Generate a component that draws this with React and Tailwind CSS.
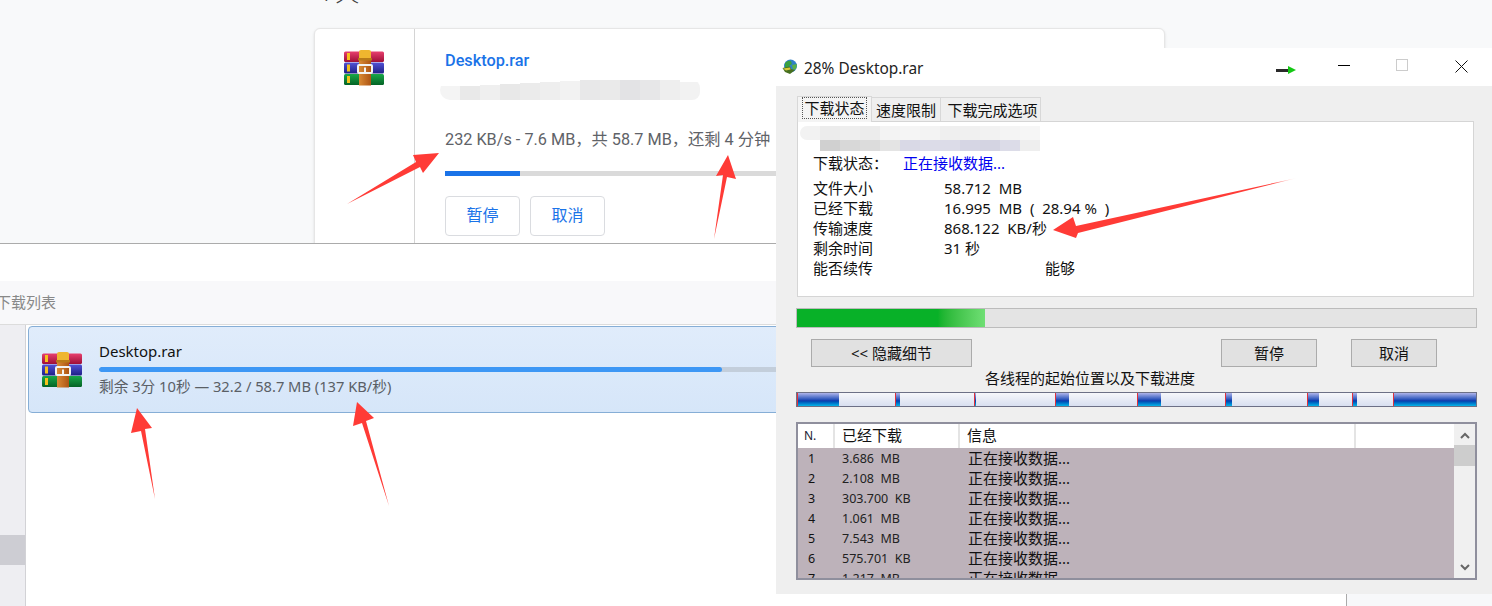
import React from "react";

const cjk = "font-['Noto_Sans','Noto_Sans_CJK_SC',sans-serif]";

const threads = [
  ["1", "3.686  MB"],
  ["2", "2.108  MB"],
  ["3", "303.700  KB"],
  ["4", "1.061  MB"],
  ["5", "7.543  MB"],
  ["6", "575.701  KB"],
  ["7", "1.217  MB"],
];

const details = [
  ["文件大小", "58.712  MB"],
  ["已经下载", "16.995  MB  (  28.94 %  )"],
  ["传输速度", "868.122  KB/秒"],
  ["剩余时间", "31 秒"],
];

// widths are px on the thread bar, from left to right
const segments = [
  ["blue", 42], ["light", 56], ["blue", 5], ["light", 74], ["blue", 2], ["light", 79],
  ["blue", 14], ["light", 68], ["blue", 24], ["light", 64], ["blue", 7], ["light", 75],
  ["blue", 12], ["light", 33], ["blue", 5], ["light", 36], ["blue", 83],
];

const cardSmudge = [
  ["h-[14px]", "bg-[#f4f4f4]"], ["h-[14px]", "bg-[#e9e9e9]"], ["h-[15px]", "bg-[#efefef]"], ["h-[16px]", "bg-[#e8e8e8]"],
  ["h-[17px]", "bg-[#ebebeb]"], ["h-[18px]", "bg-[#eeeeee]"], ["h-[19px]", "bg-[#f2f2f2]"], ["h-[20px]", "bg-[#e8e8e9]"],
  ["h-[20px]", "bg-[#eaeaea]"], ["h-[20px]", "bg-[#e3e3e5]"], ["h-[20px]", "bg-[#e7e7e8]"], ["h-[20px]", "bg-[#eeeeee]"],
  ["h-[18px]", "bg-[#f2f2f2]"],
];

const idmSmudgeTop = ["bg-[#f2f2f2]", "bg-[#ececec]", "bg-[#eeeeee]", "bg-[#ececec]", "bg-[#f3f3f3]", "bg-[#f5f5f5]", "bg-[#f3f3f3]", "bg-[#efefef]", "bg-[#f0f0f0]", "bg-[#f2f2f2]", "bg-[#f4f4f4]", "bg-[#f6f6f6]"];
const idmSmudgeBottom = ["bg-[#d0d0d0]", "bg-[#d8d8d8]", "bg-[#dcdcdc]", "bg-[#e4e4e4]", "bg-[#d9d9e6]", "bg-[#dcdce8]", "bg-[#dcdce8]", "bg-[#d6d6e4]", "bg-[#d4d4e2]", "bg-[#dcdce8]", "bg-[#eeeeee]"];

function RarIcon() {
  return (
    <svg width="40" height="36" viewBox="0 0 40 36">
      <defs>
        <linearGradient id="rarRed" x1="0" y1="0" x2="0" y2="1">
          <stop offset="0" stopColor="#e8406e" />
          <stop offset="1" stopColor="#9e0f38" />
        </linearGradient>
        <linearGradient id="rarBlue" x1="0" y1="0" x2="0" y2="1">
          <stop offset="0" stopColor="#5252d6" />
          <stop offset="1" stopColor="#1e1e86" />
        </linearGradient>
        <linearGradient id="rarGreen" x1="0" y1="0" x2="0" y2="1">
          <stop offset="0" stopColor="#18a848" />
          <stop offset="1" stopColor="#056326" />
        </linearGradient>
        <linearGradient id="rarBelt" x1="0" y1="0" x2="1" y2="0">
          <stop offset="0" stopColor="#d98a34" />
          <stop offset="1" stopColor="#ad5414" />
        </linearGradient>
      </defs>
      <rect x="0" y="1.5" width="40" height="10.5" rx="1.5" fill="url(#rarRed)" />
      <rect x="0" y="12.5" width="40" height="11" rx="1.5" fill="url(#rarBlue)" />
      <rect x="0" y="24" width="40" height="11" rx="1.5" fill="url(#rarGreen)" />
      <rect x="3" y="3" width="3" height="7" fill="#f6c21c" />
      <rect x="3" y="14.5" width="3" height="7" fill="#f6c21c" />
      <rect x="3" y="26" width="3" height="7" fill="#f6c21c" />
      <rect x="15" y="8" width="12" height="27.5" fill="url(#rarBelt)" />
      <path d="M15 9 V2 Q15 0 17 0 H25 Q27 0 27 2 V9 Z" fill="#efb62f" />
      <rect x="14" y="8" width="14" height="2.5" rx="0.5" fill="#b97a18" />
      <rect x="14" y="15" width="14" height="8" rx="1" fill="none" stroke="#f2f2f2" strokeWidth="2" />
      <rect x="20" y="17.5" width="2" height="5" fill="#f2f2f2" />
    </svg>
  );
}

function GlobeIcon() {
  return (
    <svg width="16" height="16" viewBox="0 0 16 16">
      <circle cx="8.5" cy="7" r="6.5" fill="#2f7fc8" />
      <path d="M3 4 Q6 1 9 2 L10 5 L7 7 L8 10 L5 11 L3 8 Z" fill="#3aa040" />
      <path d="M10 6 L15 5 L14 10 L11 11 Z" fill="#58b048" />
      <path d="M0.5 9 L8 7.5 L9 10 L13 11 L8 15 L3 13 Z" fill="#47701f" />
      <path d="M1 9.5 L8 8.5 L8.5 10.5 L4 11.5 Z" fill="#d8c838" />
    </svg>
  );
}

function Chevron({ down }) {
  return (
    <svg width="10" height="7" viewBox="0 0 10 7" fill="none" stroke="#666" strokeWidth="2">
      <path d={down ? "M1 1 L5 5 L9 1" : "M1 6 L5 2 L9 6"} />
    </svg>
  );
}

function BrowserPage() {
  return (
    <div className="absolute inset-x-0 top-0 h-[243px] overflow-hidden bg-[#f8f9fa] font-['Roboto','Noto_Sans_CJK_SC',sans-serif]">
      <div className="h-[28px] pl-[322px] -mt-[21px] pt-0 text-[24px] leading-[28px] text-[#444] font-light mb-[21px]">7天</div>
      <div className="ml-[314px] flex h-[240px] w-[851px] rounded-md border border-[#e6e6e6] bg-white shadow-sm">
        <div className="w-[100px] border-r border-[#d4d4d4] pl-[29px] pt-[21px]">
          <RarIcon />
        </div>
        <div className="flex-1 pl-[30px]">
          <div className="mt-[22px] text-[16.3px] leading-5 font-medium text-[#1a73e8]">Desktop.rar</div>
          <div className="mt-[9px] -ml-[5px] flex h-[20px] w-[260px] items-end overflow-hidden rounded-l-[10px] rounded-r-[8px]">
            {cardSmudge.map(([h, color], i) => (
              <div key={i} className={`w-[20px] ${h} ${color}`} />
            ))}
          </div>
          <div className="mt-[30px] text-[16.25px] leading-5 whitespace-pre text-[#5f6368]">232 KB/s - 7.6 MB，共 58.7 MB，还剩 4 分钟</div>
          <div className="mt-[21px] flex h-[5px] w-[340px] bg-[#dadada]">
            <div className="w-[75px] bg-[#1a73e8]" />
          </div>
          <div className="mt-[20px] flex gap-[10px]">
            <button className="flex h-[40px] w-[75px] items-center justify-center rounded border border-[#dadce0] text-[16px] text-[#1a73e8]">暂停</button>
            <button className="flex h-[40px] w-[75px] items-center justify-center rounded border border-[#dadce0] text-[16px] text-[#1a73e8]">取消</button>
          </div>
        </div>
      </div>
    </div>
  );
}

function DownloadList() {
  return (
    <div className={`absolute inset-x-0 top-[243px] bottom-0 flex flex-col border-t border-[#ababab] bg-white ${cjk}`}>
      <div className="h-[37px] shrink-0" />
      <div className="flex h-[44px] shrink-0 items-center overflow-hidden border-b border-[#dcdcdc] bg-[#f8f8fa] text-[15px] text-[#888]">
        <span className="-ml-[4px]">下载列表</span>
      </div>
      <div className="flex flex-1">
        <div className="w-[26px] shrink-0 border-r border-[#d2d2d6] bg-[#eeeef2] pt-[210px]">
          <div className="h-[30px] bg-[#cdcdd3]" />
        </div>
        <div className="flex-1 pt-[1px] pl-[2px] pr-[2px]">
          <div className="flex h-[87px] items-start rounded border border-[#86aed6] bg-gradient-to-b from-[#e0ecfb] to-[#d6e6f9] pl-[13px]">
            <div className="pt-[25px]">
              <RarIcon />
            </div>
            <div className="flex-1 pl-[17px]">
              <div className="mt-[14px] text-[15px] leading-[20px] text-[#111]">Desktop.rar</div>
              <div className="mt-[6px] flex h-[5px] overflow-hidden rounded-full bg-[#c3cedb]">
                <div className="w-[623px] rounded-full bg-[#3d97f5]" />
              </div>
              <div className="mt-[4px] text-[14.7px] leading-[20px] whitespace-pre text-[#5a5f66]">剩余 3分 10秒 — 32.2 / 58.7 MB (137 KB/秒)</div>
            </div>
          </div>
        </div>
        <div className="w-[146px] shrink-0 border-l border-[#aaaaaa] bg-[#f7f8fa]" />
      </div>
    </div>
  );
}

function DownloadWindow() {
  return (
    <div className={`absolute top-[48px] left-[776px] flex h-[546px] w-[716px] flex-col bg-[#efefef] text-[#111] ${cjk}`}>
      <div className="flex h-[38px] shrink-0 items-center bg-white">
        <div className="ml-[6px] mr-[6px]">
          <GlobeIcon />
        </div>
        <span className="mt-[3px] w-[120px] text-[15.4px] leading-5 whitespace-nowrap text-[#222]">28% Desktop.rar</span>
        <div className="ml-[352px] mt-[6px] flex items-center">
          <div className="h-[3px] w-[12px] bg-[#2a2a2a]" />
          <svg width="8" height="8" viewBox="0 0 8 8">
            <path d="M0 0 L8 4 L0 8 Z" fill="#14c814" />
          </svg>
        </div>
        <div className="ml-[42px] h-px w-[12px] -translate-y-[2px] bg-black" />
        <div className="ml-[46px] h-[12px] w-[12px] border border-[#cccccc] -translate-y-[2px]" />
        <svg className="ml-[47px] -translate-y-[1px]" width="13" height="13" viewBox="0 0 13 13" stroke="#111" strokeWidth="1">
          <path d="M0.5 0.5 L12.5 12.5 M12.5 0.5 L0.5 12.5" />
        </svg>
      </div>

      <div className="pl-[20px] pt-[10px]">
        <div className="ml-px flex h-[25px] items-end text-[15px] leading-[20px]">
          <div className="z-10 -mb-px flex h-[26px] w-[75px] items-start justify-center border border-[#d8d8d8] border-b-0 bg-[#f4f4f4]">
            <span className="border border-dotted border-[#555] px-[1px]">下载状态</span>
          </div>
          <div className="flex h-[24px] w-[69px] items-center justify-center border-t border-r border-[#d8d8d8]">速度限制</div>
          <div className="flex h-[24px] w-[100px] items-center justify-center border-t border-r border-[#d8d8d8] pl-[4px]">下载完成选项</div>
        </div>

        <div className="ml-px h-[176px] w-[677px] border border-[#d5d5d5] bg-white pt-[4px]">
          <div className="ml-[2px] flex h-[14px] overflow-hidden rounded-l-[7px]">
            {idmSmudgeTop.map((color, i) => (
              <div key={i} className={`h-full w-[20px] ${color}`} />
            ))}
          </div>
          <div className="ml-[22px] flex h-[11px]">
            {idmSmudgeBottom.map((color, i) => (
              <div key={i} className={`h-full w-[20px] ${color}`} />
            ))}
          </div>
          <div className="mt-[1px] flex h-[22px] items-center pl-[15px] text-[15px]">
            <span className="w-[90px]">下载状态：</span>
            <span className="text-[#0000f0]">正在接收数据...</span>
          </div>
          <div className="mt-[4px] text-[15px] leading-[20px]">
            {details.map(([label, value]) => (
              <div key={label} className="flex h-[20px] pl-[15px]">
                <span className="w-[131px]">{label}</span>
                <span className="whitespace-pre">{value}</span>
              </div>
            ))}
            <div className="flex h-[20px] pl-[15px]">
              <span className="w-[232px]">能否续传</span>
              <span>能够</span>
            </div>
          </div>
        </div>

        <div className="mt-[11px] h-[20px] w-[681px] border border-[#bcbcbc] bg-[#e4e4e4]">
          <div className="h-full w-[188px] bg-gradient-to-r from-[#08b128] from-75% to-[#6fdf74]" />
        </div>

        <div className="mt-[11px] flex h-[28px] text-[15px]">
          <button className="ml-[15px] flex w-[161px] items-center justify-center border border-[#ababab] bg-[#e1e1e1]">&lt;&lt; 隐藏细节</button>
          <button className="ml-[249px] flex w-[96px] items-center justify-center border border-[#ababab] bg-[#e1e1e1]">暂停</button>
          <button className="ml-[34px] flex w-[86px] items-center justify-center border border-[#ababab] bg-[#e1e1e1]">取消</button>
        </div>

        <div className="mt-[1px] pl-[189px] text-[15px] leading-[20px]">各线程的起始位置以及下载进度</div>

        <div className="mt-[4px] flex h-[15px] w-[681px] overflow-hidden border border-[#6c7086]">
          {segments.map(([kind, width], i) =>
            kind === "blue" ? (
              <div key={i} style={{ width }} className="h-full border-l border-[#e0303a] bg-gradient-to-b from-[#b0b4ea] via-[#0a3cae] via-60% to-[#0bb4e8]" />
            ) : (
              <div key={i} style={{ width }} className="h-full bg-gradient-to-b from-[#f6f7fb] to-[#d8dff0]" />
            )
          )}
        </div>

        <div className="mt-[15px] flex h-[158px] w-[681px] border-2 border-[#8f8f9d] bg-white">
          <div className="flex w-[656px] flex-col">
            <div className="flex h-[24px] shrink-0 text-[15px]">
              <div className="w-[37px] border-r-2 border-[#e4e4e4] pl-[6px] text-[12px] leading-[24px] text-[#223]">N.</div>
              <div className="w-[125px] border-r-2 border-[#e4e4e4] pl-[7px] leading-[22px]">已经下载</div>
              <div className="w-[396px] border-r-2 border-[#e4e4e4] pl-[7px] leading-[22px]">信息</div>
            </div>
            <div className="flex-1 overflow-hidden bg-[#bdb2ba]">
              {threads.map(([n, size]) => (
                <div key={n} className="flex h-[20px] items-center">
                  <span className="mt-[2px] w-[37px] pl-[10px] text-[12.5px]">{n}</span>
                  <span className="mt-[2px] w-[125px] pl-[7px] text-[12.5px] whitespace-pre text-[#222]">{size}</span>
                  <span className="pl-[8px] text-[15px]">正在接收数据...</span>
                </div>
              ))}
            </div>
          </div>
          <div className="flex flex-1 flex-col items-center bg-[#f0f0f0]">
            <div className="flex h-[21px] items-center pt-[1px]">
              <Chevron />
            </div>
            <div className="h-[21px] w-full bg-[#cdcdcd]" />
            <div className="mt-auto flex h-[21px] items-center">
              <Chevron down />
            </div>
          </div>
        </div>
      </div>
    </div>
  );
}

function Arrows() {
  return (
    <svg className="pointer-events-none absolute inset-0" width="1492" height="606" viewBox="0 0 1492 606">
      <defs>
        <linearGradient id="tailFade" gradientUnits="userSpaceOnUse" x1="1297" y1="178" x2="1270" y2="184">
          <stop offset="0" stopColor="#ff3b36" stopOpacity="0" />
          <stop offset="1" stopColor="#ff3b36" />
        </linearGradient>
      </defs>
      <g fill="#ff3b36">
        <polygon points="347,204 416,162 413,155 439,153 423,173 420,167" />
        <polygon points="714,239 723,175 716,176 728,155 736,179 727,177" />
        <polygon points="155,499 141,431 131,433 137,408 152,428 145,429" />
        <polygon points="389,506 362,423 353,426 357,402 374,418 366,421" />
      </g>
      <polygon points="1297,178 1076,226 1073,217 1053,230 1076,238 1078,233" fill="url(#tailFade)" />
    </svg>
  );
}

export default function App() {
  return (
    <div className="relative h-[606px] w-[1492px] overflow-hidden bg-[#f8f9fa]">
      <BrowserPage />
      <DownloadList />
      <DownloadWindow />
      <Arrows />
    </div>
  );
}
